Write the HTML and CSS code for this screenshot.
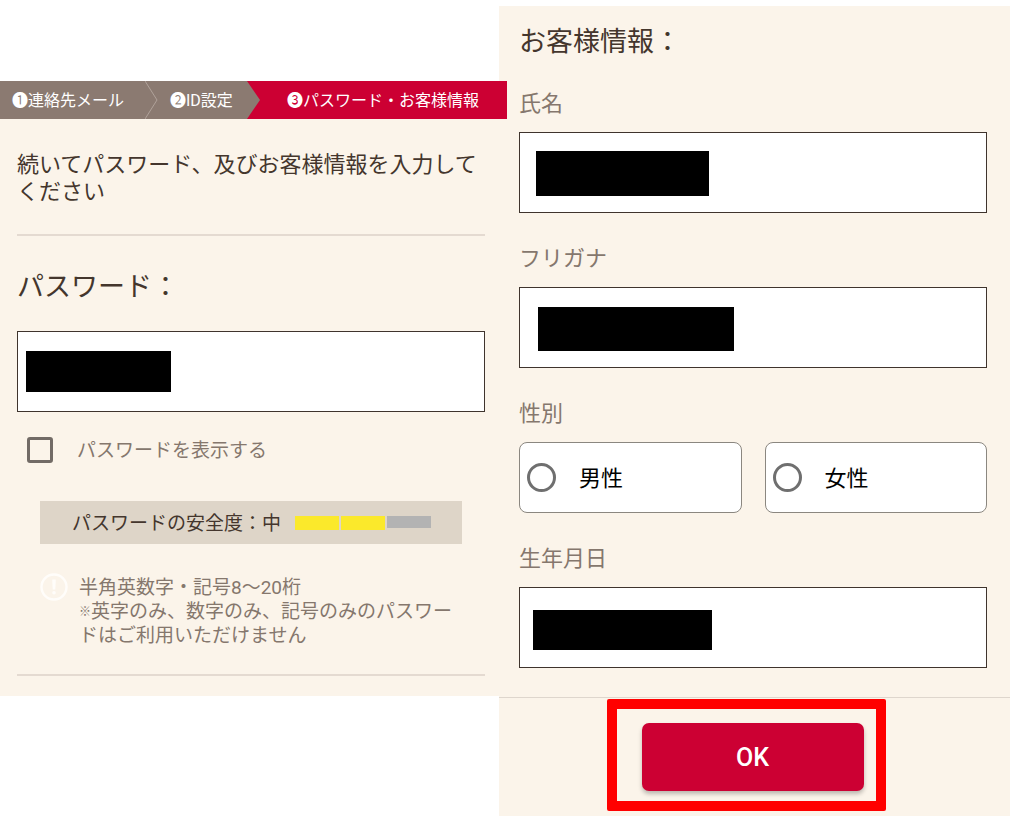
FILE: index.html
```html
<!DOCTYPE html>
<html lang="ja">
<head>
    <meta charset="UTF-8">
    <title>パスワード・お客様情報</title>
    <meta name="viewport" content="width=device-width, initial-scale=1.0">
    <link rel="stylesheet" href="styles.css">
</head>
<body>
    <form class="container">
        <section class="panel panel-password">
            <ol class="steps">
                <li class="step step-mail">❶連絡先メール</li>
                <li class="step-arrow">
                    <svg viewBox="0 0 13 38" width="13" height="38"><path d="M0 0L12 19L0 38" fill="none" stroke="#b0a29a"/></svg>
                </li>
                <li class="step step-id">❷ID設定</li>
                <li class="step-arrow current">
                    <svg viewBox="0 0 13 38" width="13" height="38"><path d="M0 0L13 19L0 38Z" fill="#8b7a71"/></svg>
                </li>
                <li class="step step-info current">❸パスワード・お客様情報</li>
            </ol>
            <div class="panel-body">
                <p class="lead">続いてパスワード、及びお客様情報を入力してください</p>
                <hr>
                <h2><label for="password">パスワード：</label></h2>
                <div class="field">
                    <input type="password" id="password">
                    <span class="mask mask-password"></span>
                </div>
                <label class="show-password">
                    <input type="checkbox" id="showPassword" onclick="togglePassword()">
                    <span class="text">パスワードを表示する</span>
                </label>
                <div class="strength">
                    <span class="text">パスワードの安全度：中</span>
                    <div class="bars">
                        <span class="bar on"></span>
                        <span class="bar on"></span>
                        <span class="bar"></span>
                    </div>
                </div>
                <div class="note">
                    <svg viewBox="0 0 28 28" width="28" height="28">
                        <circle cx="14" cy="14" r="12.5" fill="none" stroke="#fffdfa" stroke-width="2.4"/>
                        <path d="M12.2 6.5h3.6l-.5 10h-2.6z" fill="#fffdfa"/>
                        <circle cx="14" cy="19.8" r="1.8" fill="#fffdfa"/>
                    </svg>
                    <p>半角英数字・記号8～20桁<br><small>※</small>英字のみ、数字のみ、記号のみのパスワードはご利用いただけません</p>
                </div>
                <hr>
            </div>
        </section>

        <section class="panel panel-customer">
            <div class="panel-body">
                <h2>お客様情報：</h2>
                <div class="group">
                    <label for="name">氏名</label>
                    <div class="field">
                        <input type="text" id="name">
                        <span class="mask mask-name"></span>
                    </div>
                </div>
                <div class="group">
                    <label for="kana">フリガナ</label>
                    <div class="field">
                        <input type="text" id="kana">
                        <span class="mask mask-kana"></span>
                    </div>
                </div>
                <fieldset class="group">
                    <legend>性別</legend>
                    <div class="radios">
                        <label class="radio"><input type="radio" name="gender" value="male"><span class="text">男性</span></label>
                        <label class="radio"><input type="radio" name="gender" value="female"><span class="text">女性</span></label>
                    </div>
                </fieldset>
                <div class="group">
                    <label for="birth">生年月日</label>
                    <div class="field">
                        <input type="text" id="birth">
                        <span class="mask mask-birth"></span>
                    </div>
                </div>
            </div>
            <div class="footer">
                <div class="submit">
                    <button type="button">OK</button>
                    <span class="highlight"></span>
                </div>
            </div>
        </section>
    </form>

    <script>
        function togglePassword() {
            var checked = document.getElementById("showPassword").checked;
            document.getElementById("password").type = checked ? "text" : "password";
        }
    </script>
</body>
</html>
```
FILE: styles.css
```css
* {
    box-sizing: border-box;
}
body {
    font-family: Roboto, "Noto Sans CJK JP", sans-serif;
    font-weight: 400;
    margin: 0;
    color: #44362d;
    background-color: #fff;
}
.container {
    display: grid;
    grid-template-columns: 499fr 511fr;
    align-items: start;
    padding: 6px 0 11px;
}
.panel {
    background-color: #fbf4ea;
}
.panel-password {
    margin-top: 75px;
    padding-bottom: 20px;
}
.panel-password .panel-body {
    padding: 32px 14px 0 17px;
}
.panel-customer .panel-body {
    padding: 16px 23px 29px 20px;
}

/* ステップ表示 */
.steps {
    position: relative;
    display: flex;
    width: calc(100% + 8px);
    height: 38px;
    margin: 0;
    padding: 0;
    list-style: none;
    font-size: 16px;
    line-height: 39px;
    color: #fff;
    background-color: #8b7a71;
    white-space: nowrap;
}
.step-mail {
    flex: 0 0 145px;
    padding-left: 12px;
}
.step-id {
    flex: 0 0 89px;
    padding-left: 12px;
}
.step-info {
    flex: 1;
    padding-left: 27px;
}
.step-arrow svg {
    display: block;
}
.current {
    background-color: #cc0033;
}

.lead {
    margin: 0 0 29px;
    font-size: 22px;
    line-height: 27px;
}
hr {
    height: 2px;
    margin: 0;
    border: none;
    background-color: #e4dad1;
}
h2 {
    margin: 0;
    font-size: 27px;
    font-weight: inherit;
    line-height: 40px;
}
.panel-password h2 {
    margin: 31px 0 24px;
}
.panel-customer h2 {
    margin-bottom: 27px;
}

/* 入力欄 */
.field {
    position: relative;
}
.field input {
    display: block;
    width: 100%;
    height: 81px;
    padding: 0 16px;
    border: 1px solid #3f342d;
    border-radius: 0;
    background-color: #fff;
    font: inherit;
    font-size: 22px;
}
.mask {
    position: absolute;
    background-color: #000;
}
.mask-password {
    left: 9px;
    top: 20px;
    width: 145px;
    height: 41px;
}
.mask-name {
    left: 17px;
    top: 19px;
    width: 173px;
    height: 45px;
}
.mask-kana {
    left: 19px;
    top: 20px;
    width: 196px;
    height: 44px;
}
.mask-birth {
    left: 14px;
    top: 23px;
    width: 179px;
    height: 40px;
}

.text {
    padding-top: 2px;
}
.show-password {
    display: flex;
    align-items: center;
    gap: 24px;
    margin: 23px 0 36px 10px;
    font-size: 19px;
    line-height: 28px;
    color: #85776d;
}
.show-password input {
    appearance: none;
    width: 26px;
    height: 26px;
    margin: 0;
    border: 3px solid #726b66;
    border-radius: 3px;
}
.show-password input:checked {
    background-color: #cc0033;
}
.strength {
    display: flex;
    align-items: center;
    gap: 14px;
    height: 43px;
    margin: 0 23px;
    padding-left: 32px;
    font-size: 19px;
    line-height: 28px;
    background-color: #ded5c8;
}
.bars {
    display: flex;
    gap: 2px;
}
.bar {
    width: 44px;
    height: 12px;
    background-color: #b3b3b3;
}
.bar.on {
    height: 14px;
    background-color: #fbe92b;
}
.note {
    display: flex;
    align-items: flex-start;
    gap: 11px;
    margin: 29px 23px 26px;
    font-size: 19px;
    line-height: 24px;
    color: #85776d;
}
.note svg {
    flex: none;
}
.note p {
    flex: 1;
    margin: 3px 0 0;
}
.note small {
    font-size: 12px;
    line-height: 12px;
    vertical-align: 2px;
}

.group {
    margin: 0 0 31px;
    padding: 0;
    border: none;
}
.group:last-child {
    margin-bottom: 0;
}
.group > label,
legend {
    display: block;
    margin-bottom: 13px;
    padding: 0;
    font-size: 22px;
    line-height: 30px;
    color: #85776d;
}
.radios {
    display: grid;
    grid-template-columns: 1fr 1fr;
    gap: 23px;
}
.radio {
    display: flex;
    align-items: center;
    gap: 23px;
    height: 71px;
    padding-left: 7px;
    border: 1px solid #8b8780;
    border-radius: 8px;
    background-color: #fff;
    font-size: 22px;
    line-height: 28px;
    color: #000;
}
.radio input {
    appearance: none;
    width: 29px;
    height: 29px;
    margin: 0;
    border: 3px solid #6f6f6f;
    border-radius: 50%;
}
.radio input:checked {
    background-color: #cc0033;
}

.footer {
    display: flex;
    justify-content: center;
    padding: 25px 4px 25px 0;
    border-top: 1px solid #ded6cd;
}
.submit {
    position: relative;
}
button {
    display: block;
    width: 222px;
    height: 68px;
    border: none;
    border-radius: 7px;
    background-color: #cc0033;
    box-shadow: 0 3px 4px rgba(0,0,0,0.25);
    color: #fff;
    font-family: inherit;
    font-size: 25px;
    font-weight: 500;
    cursor: pointer;
}
button:hover {
    background-color: #b8002e;
}
/* OKボタンを囲む赤枠 */
.highlight {
    position: absolute;
    top: -24px;
    right: -22px;
    bottom: -20px;
    left: -35px;
    border: 10px solid #ff0000;
    border-radius: 2px;
    pointer-events: none;
}
```
